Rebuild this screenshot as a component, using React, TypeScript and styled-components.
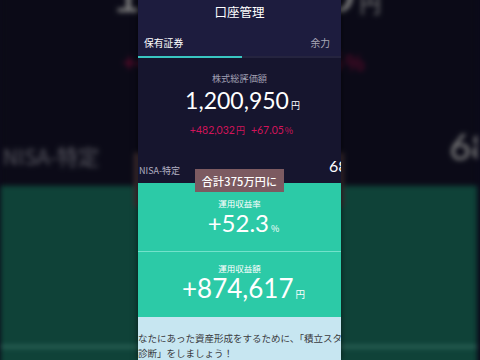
import React from 'react';
import styled, { createGlobalStyle } from 'styled-components';

const Global = createGlobalStyle`
  html, body { margin: 0; padding: 0; background: #0b0a1a; }
  body { font-family: "Noto Sans CJK JP", "Noto Sans", sans-serif; }
`;

const Stage = styled.div`
  width: 480px;
  height: 360px;
  overflow: hidden;
  display: grid;
  grid-template-areas: "stack";
  background: #0b0a1a;
`;

const Backdrop = styled.div`
  grid-area: stack;
  justify-self: start;
  margin-left: 138px;
  width: 203px;
  height: 360px;
  transform-origin: 102px 181px;
  transform: scale(2.35);
  filter: blur(1.2px) brightness(0.5);
  z-index: 0;
`;

const Front = styled.div`
  grid-area: stack;
  justify-self: start;
  margin-left: 138px;
  width: 203px;
  height: 360px;
  overflow: hidden;
  position: relative;
  z-index: 1;
  box-shadow: 0 0 6px rgba(0, 0, 0, 0.6);
`;

const Screen = styled.div`
  width: 203px;
  height: 360px;
  display: flex;
  flex-direction: column;
  overflow: hidden;
  background: #16152e;
`;

const Header = styled.div`
  height: 30px;
  flex: none;
  display: flex;
  align-items: flex-start;
  justify-content: center;
  padding-top: 3px;
  box-sizing: border-box;
  background: #1d1c3e;
`;

const Title = styled.div`
  color: #ffffff;
  font-size: 12.5px;
  line-height: 18px;
`;

const Tabs = styled.div`
  height: 26px;
  flex: none;
  display: flex;
  align-items: center;
  justify-content: space-between;
  padding: 0 11px 0 6px;
  background: #1d1c3e;
`;

const Tab = styled.div<{ $active?: boolean }>`
  font-size: 9.8px;
  line-height: 14px;
  color: ${(p) => (p.$active ? '#ffffff' : '#a9a8b8')};
`;

const Indicator = styled.div`
  height: 2px;
  flex: none;
  background: #25243f;
  display: flex;
`;

const IndicatorFill = styled.div`
  width: 104px;
  background: #39c6c1;
`;

const Summary = styled.div`
  flex: none;
  display: flex;
  flex-direction: column;
  align-items: center;
  padding-top: 14px;
  height: 77px;
  box-sizing: border-box;
`;

const Caption = styled.div`
  font-size: 9.2px;
  line-height: 12px;
  color: #a09fb2;
`;

const BigValue = styled.div`
  margin-top: 2px;
  font-family: Lato, "Noto Sans", sans-serif;
  font-size: 23px;
  line-height: 28px;
  color: #ffffff;
  display: flex;
  align-items: baseline;
  margin-left: 6px;
`;

const Unit = styled.span<{ $size?: number }>`
  font-family: "Noto Sans CJK JP", sans-serif;
  font-size: ${(p) => p.$size ?? 9}px;
  margin-left: 2px;
`;

const Gain = styled.div`
  margin-top: 3px;
  font-family: Lato, "Noto Sans", sans-serif;
  font-size: 10.5px;
  line-height: 14px;
  color: #d2145a;
  display: flex;
  align-items: baseline;
  gap: 6px;
  margin-left: 4px;
`;

const GainPart = styled.span`
  display: inline-flex;
  align-items: baseline;
`;

const GainUnit = styled.span`
  font-family: "Noto Sans CJK JP", sans-serif;
  font-size: 9px;
  margin-left: 1px;
`;

const AccountRow = styled.div`
  height: 48px;
  flex: none;
  display: grid;
  grid-template-columns: 191px auto;
  align-items: end;
  padding-bottom: 6px;
  box-sizing: border-box;
  overflow: hidden;
`;

const AccountName = styled.div`
  font-size: 9px;
  line-height: 12px;
  color: #b2b0c2;
  padding-left: 1px;
`;

const AccountValue = styled.div`
  font-family: Lato, "Noto Sans", sans-serif;
  font-size: 16px;
  line-height: 18px;
  color: #ffffff;
  white-space: nowrap;
  margin-bottom: 2px;
`;

const ResultPanel = styled.div<{ $dim?: boolean }>`
  position: relative;
  height: 134px;
  flex: none;
  display: flex;
  flex-direction: column;
  background: ${(p) => (p.$dim ? '#1d8470' : '#2ccaa7')};
`;

const Callout = styled.div`
  position: absolute;
  top: -14px;
  left: 57px;
  width: 89px;
  height: 23px;
  display: flex;
  align-items: center;
  justify-content: center;
  background: #7c5a61;
  color: #ffffff;
  font-size: 11px;
  font-weight: 500;
  letter-spacing: 0.2px;
`;

const Metric = styled.div<{ $h: number; $pt: number }>`
  height: ${(p) => p.$h}px;
  padding-top: ${(p) => p.$pt}px;
  box-sizing: border-box;
  display: flex;
  flex-direction: column;
  align-items: center;
`;

const MetricLabel = styled.div`
  font-size: 8.5px;
  line-height: 12px;
  color: #ffffff;
`;

const MetricValue = styled.div<{ $size: number }>`
  font-family: Lato, "Noto Sans", sans-serif;
  font-size: ${(p) => p.$size}px;
  line-height: 28px;
  color: #ffffff;
  display: flex;
  align-items: baseline;
  margin-left: 8px;
`;

const MetricDivider = styled.div`
  height: 1px;
  flex: none;
  background: #72e2cb;
`;

const Notice = styled.div`
  flex: 1;
  background: #c7e6f1;
  padding-top: 14px;
  overflow: hidden;
`;

const NoticeLine = styled.div`
  font-size: 9.5px;
  line-height: 15px;
  color: #3a3a3e;
  white-space: nowrap;
`;

const PhoneScreen: React.FC<{ dim?: boolean }> = ({ dim }) => (
  <Screen>
    <Header>
      <Title>口座管理</Title>
    </Header>
    <Tabs>
      <Tab $active>保有証券</Tab>
      <Tab>余力</Tab>
    </Tabs>
    <Indicator>
      <IndicatorFill />
    </Indicator>
    <Summary>
      <Caption>株式総評価額</Caption>
      <BigValue>
        1,200,950<Unit>円</Unit>
      </BigValue>
      <Gain>
        <GainPart>
          +482,032<GainUnit>円</GainUnit>
        </GainPart>
        <GainPart>
          +67.05<GainUnit>%</GainUnit>
        </GainPart>
      </Gain>
    </Summary>
    <AccountRow>
      <AccountName>NISA-特定</AccountName>
      <AccountValue>681,300</AccountValue>
    </AccountRow>
    <ResultPanel $dim={dim}>
      <Callout>合計375万円に</Callout>
      <Metric $h={68} $pt={14}>
        <MetricLabel>運用収益率</MetricLabel>
        <MetricValue $size={24}>
          +52.3<Unit $size={9}>%</Unit>
        </MetricValue>
      </Metric>
      <MetricDivider />
      <Metric $h={65} $pt={10}>
        <MetricLabel>運用収益額</MetricLabel>
        <MetricValue $size={26}>
          +874,617<Unit $size={9.5}>円</Unit>
        </MetricValue>
      </Metric>
    </ResultPanel>
    <Notice>
      <NoticeLine>なたにあった資産形成をするために、「積立スタイル</NoticeLine>
      <NoticeLine>診断」をしましょう！</NoticeLine>
    </Notice>
  </Screen>
);

export default function App() {
  return (
    <>
      <Global />
      <Stage>
        <Backdrop aria-hidden>
          <PhoneScreen dim />
        </Backdrop>
        <Front>
          <PhoneScreen />
        </Front>
      </Stage>
    </>
  );
}
